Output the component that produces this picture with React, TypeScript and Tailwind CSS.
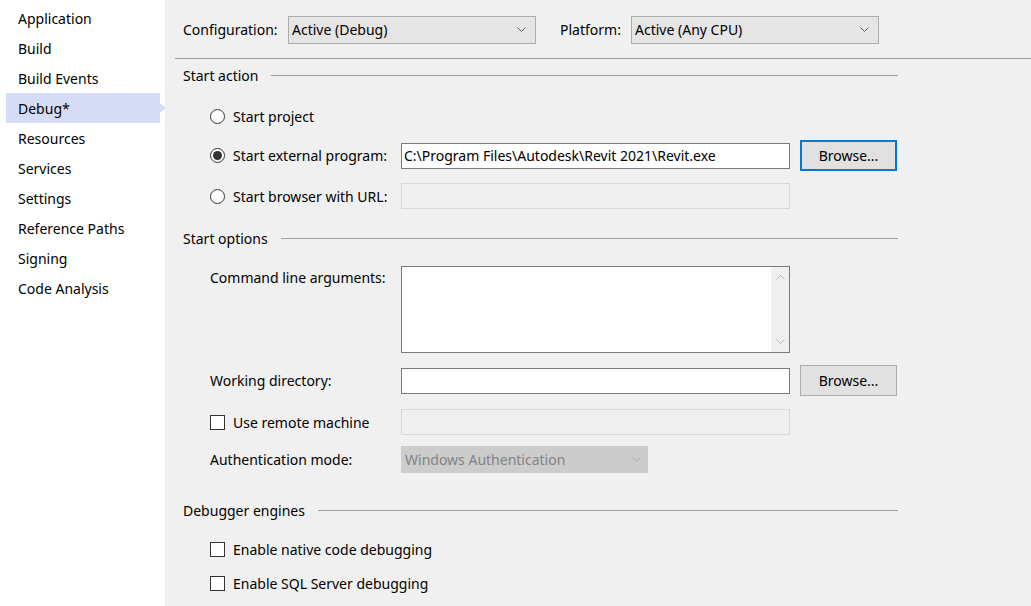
import React from 'react';

const font = "font-['Noto_Sans',sans-serif]";

const navItems = [
  'Application',
  'Build',
  'Build Events',
  'Debug*',
  'Resources',
  'Services',
  'Settings',
  'Reference Paths',
  'Signing',
  'Code Analysis',
];

const Chevron = ({ className = '' }: { className?: string }) => (
  <svg width="9" height="5" viewBox="0 0 9 5" className={className}>
    <path d="M0.5 0.5 L4.5 4.5 L8.5 0.5" fill="none" stroke="currentColor" strokeWidth="1" />
  </svg>
);

const Dropdown = ({ value, width }: { value: string; width: string }) => (
  <div className={`${width} h-[28px] flex items-center justify-between bg-[#e5e5e5] border border-[#acacac] pl-[3px] pr-[9px]`}>
    <span className="text-[14px] text-black">{value}</span>
    <Chevron className="text-[#606060]" />
  </div>
);

const SectionHeader = ({ title, className = '' }: { title: string; className?: string }) => (
  <div className={`flex items-center h-[26px] ${className}`}>
    <span className="text-[14px] text-black">{title}</span>
    <div className="flex-1 ml-[13px] h-px bg-[#a0a0a0]" />
  </div>
);

const Radio = ({ checked }: { checked?: boolean }) => (
  <div className="w-[15px] h-[15px] rounded-full border border-[#333333] bg-white flex items-center justify-center">
    {checked && <div className="w-[9px] h-[9px] rounded-full bg-[#333333]" />}
  </div>
);

const Checkbox = () => <div className="w-[15px] h-[15px] border border-[#333333] bg-white" />;

const Button = ({ focused }: { focused?: boolean }) => (
  <button
    className={`w-[97px] h-[31px] bg-[#e1e1e1] text-[14px] text-black ${
      focused ? 'border-2 border-[#0078d7]' : 'border border-[#adadad]'
    }`}
  >
    Browse...
  </button>
);

const TextInput = ({ value, disabled }: { value?: string; disabled?: boolean }) => (
  <div
    className={`w-[389px] h-[26px] flex items-center px-[2px] text-[14px] text-black ${
      disabled ? 'bg-[#f0f0f0] border border-[#d9d9d9]' : 'bg-white border border-[#7a7a7a]'
    }`}
  >
    {value}
  </div>
);

export default function App() {
  return (
    <div className={`flex w-[1031px] h-[606px] overflow-hidden ${font} text-black`}>
      {/* Sidebar */}
      <div className="w-[165px] shrink-0 bg-white pt-[3px]">
        {navItems.map((item) => {
          const active = item === 'Debug*';
          return (
            <div key={item} className="relative h-[30px]">
              <div
                className={`ml-[6px] w-[154px] h-[30px] flex items-center pl-[12px] text-[14px] ${
                  active ? 'bg-[#d6dcf5]' : ''
                }`}
              >
                {item}
              </div>
              {active && (
                <div className="absolute left-[160px] top-[10px] w-0 h-0 border-y-[5px] border-y-transparent border-l-[6px] border-l-[#d6dcf5]" />
              )}
            </div>
          );
        })}
      </div>

      {/* Main */}
      <div className="flex-1 bg-[#f0f0f0]">
        <div className="h-[59px] ml-[10px] border-b border-[#a0a0a0] flex items-center pl-[8px] pt-[1px]">
          <span className="text-[14px] w-[105px]">Configuration:</span>
          <Dropdown value="Active (Debug)" width="w-[248px]" />
          <span className="text-[14px] ml-[24px] w-[71px]">Platform:</span>
          <Dropdown value="Active (Any CPU)" width="w-[248px]" />
        </div>

        <div className="w-[733px] pl-[18px]">
          <SectionHeader title="Start action" className="mt-[3px]" />

          <div className="pl-[27px]">
            <div className="flex items-center h-[26px] mt-[15px]">
              <Radio />
              <span className="ml-[8px] text-[14px]">Start project</span>
            </div>

            <div className="flex items-center h-[31px] mt-[11px]">
              <div className="w-[191px] flex items-center">
                <Radio checked />
                <span className="ml-[8px] text-[14px]">Start external program:</span>
              </div>
              <TextInput value="C:\Program Files\Autodesk\Revit 2021\Revit.exe" />
              <div className="ml-[10px]">
                <Button focused />
              </div>
            </div>

            <div className="flex items-center h-[26px] mt-[12px]">
              <div className="w-[191px] flex items-center">
                <Radio />
                <span className="ml-[8px] text-[14px]">Start browser with URL:</span>
              </div>
              <TextInput disabled />
            </div>
          </div>

          <SectionHeader title="Start options" className="mt-[16px]" />

          <div className="pl-[27px]">
            <div className="flex items-start mt-[15px]">
              <div className="w-[191px] text-[14px] pt-[1px]">Command line arguments:</div>
              <div className="w-[389px] h-[87px] bg-white border border-[#7a7a7a] flex justify-end">
                <div className="w-[18px] h-full bg-[#f0f0f0] flex flex-col items-center justify-between py-[8px] text-[#b8b8b8]">
                  <Chevron className="rotate-180" />
                  <Chevron />
                </div>
              </div>
            </div>

            <div className="flex items-center h-[31px] mt-[12px]">
              <div className="w-[191px] text-[14px]">Working directory:</div>
              <TextInput />
              <div className="ml-[10px]">
                <Button />
              </div>
            </div>

            <div className="flex items-center h-[26px] mt-[13px]">
              <div className="w-[191px] flex items-center">
                <Checkbox />
                <span className="ml-[8px] text-[14px]">Use remote machine</span>
              </div>
              <TextInput disabled />
            </div>

            <div className="flex items-center h-[27px] mt-[11px]">
              <div className="w-[191px] text-[14px]">Authentication mode:</div>
              <div className="w-[247px] h-[27px] flex items-center justify-between bg-[#cccccc] border border-[#cccccc] pl-[3px] pr-[6px]">
                <span className="text-[14px] text-[#838383]">Windows Authentication</span>
                <Chevron className="text-[#a8a8a8]" />
              </div>
            </div>
          </div>

          <SectionHeader title="Debugger engines" className="mt-[24px]" />

          <div className="pl-[27px]">
            <div className="flex items-center h-[26px] mt-[13px]">
              <Checkbox />
              <span className="ml-[8px] text-[14px]">Enable native code debugging</span>
            </div>
            <div className="flex items-center h-[26px] mt-[8px]">
              <Checkbox />
              <span className="ml-[8px] text-[14px]">Enable SQL Server debugging</span>
            </div>
          </div>
        </div>
      </div>
    </div>
  );
}
